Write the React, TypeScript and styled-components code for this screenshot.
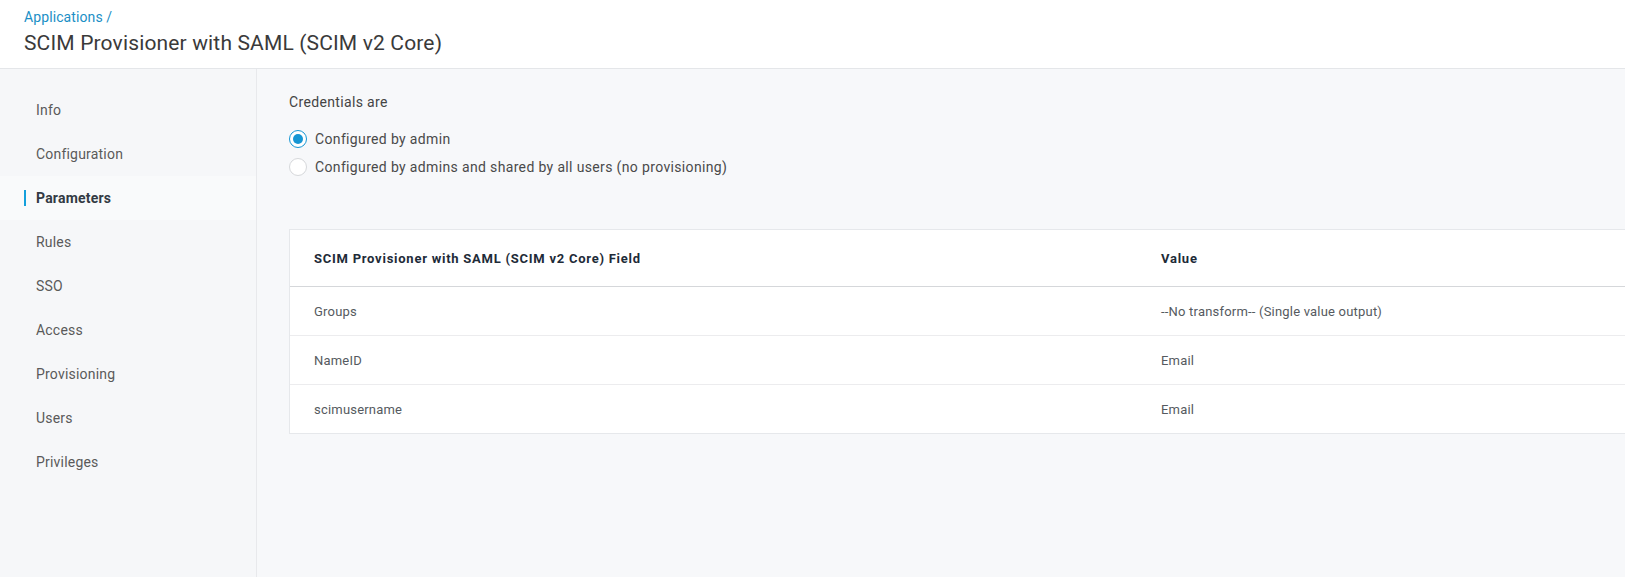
import { useState } from 'react';
import styled, { createGlobalStyle } from 'styled-components';

const GlobalStyle = createGlobalStyle`
  html, body {
    margin: 0;
    padding: 0;
    background: #f7f8fa;
    font-family: Roboto, "Liberation Sans", Arial, sans-serif;
  }
  * {
    box-sizing: border-box;
  }
`;

const navItems = [
  'Info',
  'Configuration',
  'Parameters',
  'Rules',
  'SSO',
  'Access',
  'Provisioning',
  'Users',
  'Privileges',
];

const credentialOptions = [
  'Configured by admin',
  'Configured by admins and shared by all users (no provisioning)',
];

const rows = [
  { field: 'Groups', value: '--No transform-- (Single value output)' },
  { field: 'NameID', value: 'Email' },
  { field: 'scimusername', value: 'Email' },
];

const App = () => {
  const [active, setActive] = useState('Parameters');
  const [credential, setCredential] = useState(0);

  return (
    <Page>
      <GlobalStyle />
      <Header>
        <Breadcrumb href="#">Applications /</Breadcrumb>
        <Title>SCIM Provisioner with SAML (SCIM v2 Core)</Title>
      </Header>
      <Body>
        <Sidebar>
          {navItems.map((item) => (
            <NavItem
              key={item}
              $active={item === active}
              onClick={() => setActive(item)}
            >
              <NavBar $active={item === active} />
              {item}
            </NavItem>
          ))}
        </Sidebar>
        <Content>
          <FieldLabel>Credentials are</FieldLabel>
          <RadioGroup>
            {credentialOptions.map((option, i) => (
              <RadioRow key={option} onClick={() => setCredential(i)}>
                <RadioCircle $checked={credential === i}>
                  {credential === i && <RadioDot />}
                </RadioCircle>
                {option}
              </RadioRow>
            ))}
          </RadioGroup>
          <Table>
            <HeadRow>
              <HeadCell>SCIM Provisioner with SAML (SCIM v2 Core) Field</HeadCell>
              <HeadCell>Value</HeadCell>
            </HeadRow>
            {rows.map((row, i) => (
              <Row key={row.field} $last={i === rows.length - 1}>
                <Cell>{row.field}</Cell>
                <Cell>{row.value}</Cell>
              </Row>
            ))}
          </Table>
        </Content>
      </Body>
    </Page>
  );
};

export default App;

const Page = styled.div`
  display: flex;
  flex-direction: column;
  min-height: 100vh;
  overflow: hidden;
`;

const Header = styled.header`
  height: 69px;
  background: #ffffff;
  border-bottom: 1px solid #e4e6e9;
  padding: 7px 24px 0;
  display: flex;
  flex-direction: column;
`;

const Breadcrumb = styled.a`
  font-size: 14px;
  line-height: 20px;
  letter-spacing: 0.1px;
  color: #1b8fc6;
  text-decoration: none;
`;

const Title = styled.h1`
  margin: 3px 0 0;
  font-size: 21px;
  line-height: 27px;
  font-weight: 400;
  letter-spacing: 0.15px;
  color: #3a3a3a;
`;

const Body = styled.div`
  flex: 1;
  display: flex;
`;

const Sidebar = styled.nav`
  width: 257px;
  flex-shrink: 0;
  background: #f6f7f9;
  border-right: 1px solid #e8e9ec;
  padding-top: 19px;
  display: flex;
  flex-direction: column;
`;

const NavItem = styled.div<{ $active: boolean }>`
  height: 44px;
  display: flex;
  align-items: center;
  padding-left: 24px;
  font-size: 14px;
  letter-spacing: 0.2px;
  color: ${(p) => (p.$active ? '#333a44' : '#5a5a5a')};
  font-weight: ${(p) => (p.$active ? 700 : 400)};
  background: ${(p) => (p.$active ? '#f9fafb' : 'transparent')};
  cursor: pointer;
`;

const NavBar = styled.span<{ $active: boolean }>`
  width: 2px;
  height: 16px;
  margin-right: 10px;
  background: ${(p) => (p.$active ? '#14a0dc' : 'transparent')};
`;

const Content = styled.main`
  flex: 1;
  min-width: 0;
  background: #f7f8fa;
  padding: 23px 0 0 32px;
  overflow: hidden;
`;

const FieldLabel = styled.div`
  font-size: 14px;
  line-height: 20px;
  letter-spacing: 0.35px;
  color: #444444;
`;

const RadioGroup = styled.div`
  margin-top: 13px;
  display: flex;
  flex-direction: column;
`;

const RadioRow = styled.label`
  height: 28px;
  display: flex;
  align-items: center;
  gap: 8px;
  font-size: 14px;
  letter-spacing: 0.35px;
  color: #4a4a4a;
  cursor: pointer;
`;

const RadioCircle = styled.span<{ $checked: boolean }>`
  width: 18px;
  height: 18px;
  border-radius: 50%;
  background: #ffffff;
  border: ${(p) => (p.$checked ? '1.5px solid #1596d4' : '1px solid #d6d8db')};
  display: flex;
  align-items: center;
  justify-content: center;
`;

const RadioDot = styled.span`
  width: 10px;
  height: 10px;
  border-radius: 50%;
  background: #1596d4;
`;

const Table = styled.div`
  margin-top: 48px;
  width: 1400px;
  background: #ffffff;
  border: 1px solid #e6e8eb;
`;

const HeadRow = styled.div`
  display: grid;
  grid-template-columns: 847px 1fr;
  height: 57px;
  align-items: center;
  border-bottom: 1px solid #d5d7da;
`;

const HeadCell = styled.div`
  padding-left: 24px;
  font-size: 13px;
  font-weight: 700;
  letter-spacing: 0.75px;
  color: #1e2b38;
`;

const Row = styled.div<{ $last: boolean }>`
  display: grid;
  grid-template-columns: 847px 1fr;
  height: ${(p) => (p.$last ? '48px' : '49px')};
  align-items: center;
  border-bottom: ${(p) => (p.$last ? 'none' : '1px solid #ececee')};
`;

const Cell = styled.div`
  padding-left: 24px;
  font-size: 13px;
  letter-spacing: 0.2px;
  color: #555a60;
`;
